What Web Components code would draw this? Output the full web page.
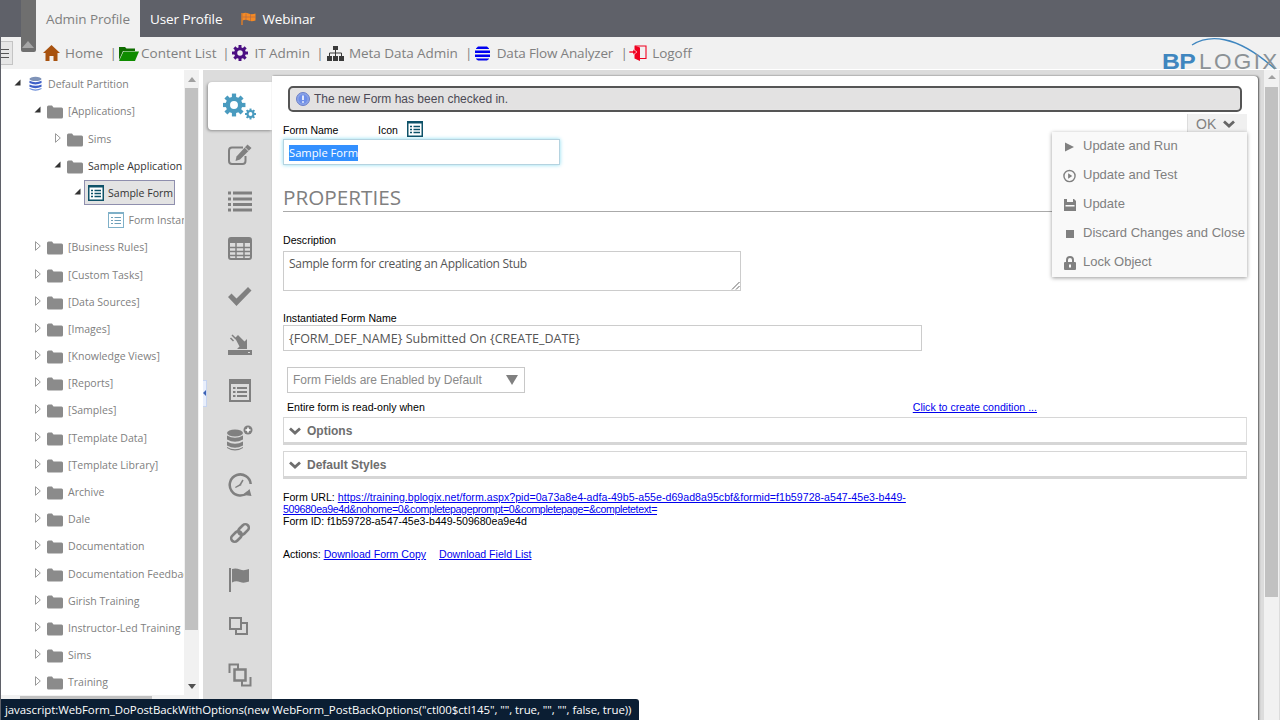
<!DOCTYPE html>
<html lang="en"><head><meta charset="utf-8"><title>Form</title>
<style>
html,body{margin:0;padding:0;height:720px;overflow:hidden;background:#fff;font-family:"Liberation Sans",Arial,sans-serif}
app-shell{width:1280px;height:720px}
</style></head><body>
<app-shell>
  <top-tabs slot="top"></top-tabs>
  <nav-bar slot="top"></nav-bar>
  <tree-panel slot="tree">
    <tree-row level="0" state="open" icon="db" label="Default Partition"></tree-row>
    <tree-row level="1" state="open" label="[Applications]"></tree-row>
    <tree-row level="2" state="closed" label="Sims"></tree-row>
    <tree-row level="2" state="open" label="Sample Application" dark></tree-row>
    <tree-row level="3" state="open" icon="form" label="Sample Form" selected></tree-row>
    <tree-row level="4" icon="formlight" label="Form Instances"></tree-row>
    <tree-row level="1" state="closed" label="[Business Rules]"></tree-row>
    <tree-row level="1" state="closed" label="[Custom Tasks]"></tree-row>
    <tree-row level="1" state="closed" label="[Data Sources]"></tree-row>
    <tree-row level="1" state="closed" label="[Images]"></tree-row>
    <tree-row level="1" state="closed" label="[Knowledge Views]"></tree-row>
    <tree-row level="1" state="closed" label="[Reports]"></tree-row>
    <tree-row level="1" state="closed" label="[Samples]"></tree-row>
    <tree-row level="1" state="closed" label="[Template Data]"></tree-row>
    <tree-row level="1" state="closed" label="[Template Library]"></tree-row>
    <tree-row level="1" state="closed" label="Archive"></tree-row>
    <tree-row level="1" state="closed" label="Dale"></tree-row>
    <tree-row level="1" state="closed" label="Documentation"></tree-row>
    <tree-row level="1" state="closed" label="Documentation Feedback"></tree-row>
    <tree-row level="1" state="closed" label="Girish Training"></tree-row>
    <tree-row level="1" state="closed" label="Instructor-Led Training"></tree-row>
    <tree-row level="1" state="closed" label="Sims"></tree-row>
    <tree-row level="1" state="closed" label="Training"></tree-row>
  </tree-panel>
  <side-tabs slot="side"></side-tabs>
  <form-pane slot="main"></form-pane>
  <ok-menu slot="over"></ok-menu>
  <status-tip slot="over">javascript:WebForm_DoPostBackWithOptions(new WebForm_PostBackOptions("ctl00$ctl145", "", true, "", "", false, true))</status-tip>
</app-shell>
<script>
const def=(name,html)=>{customElements.define(name,class extends HTMLElement{
  connectedCallback(){ if(this.shadowRoot) return; const r=this.attachShadow({mode:'open'}); r.innerHTML=typeof html==='function'?html(this):html; }
});};

const ICON={
 folder:'<svg width="16" height="14" viewBox="0 0 16 14"><path fill="#8b8b8b" d="M0 2q0-1.500 1.500-1.500h3.500l1.500 2h8q1.500 0 1.500 1.500v8q0 1.500-1.500 1.500h-13q-1.500 0-1.500-1.500z"/></svg>',
 db:'<svg width="13" height="16" viewBox="0 0 14 16"><ellipse cx="7" cy="2.500" rx="6.500" ry="2.300" fill="#7f93b8"/><path fill="#3f60c8" d="M.5 4.500q6.500 3 13 0v2.500q-6.500 3-13 0zM.5 8.500q6.500 3 13 0v2.500q-6.500 3-13 0z"/><path fill="#6f8fd8" d="M.5 12.300q6.500 3 13 0v1.200q-6.500 3.500-13 0z"/></svg>',
 form:'<svg width="16" height="16" viewBox="0 0 16 16"><rect x=".75" y=".75" width="14.500" height="14.500" fill="#fff" stroke="#0e5268" stroke-width="1.500"/><rect x="0" y="0" width="16" height="2.500" fill="#0e5268"/><path stroke="#0e5268" stroke-width="1.500" d="M3 5.500h2M6.500 5.500h6.500M3 8.500h2M6.500 8.500h6.500M3 11.500h2M6.500 11.500h6.500"/></svg>',
 formlight:'<svg width="16" height="16" viewBox="0 0 16 16"><rect x=".5" y=".5" width="15" height="15" fill="#fff" stroke="#7fb0c8"/><rect x="0" y="0" width="16" height="2" fill="#7fb0c8"/><path stroke="#6f9fb8" stroke-width="1" d="M3 5.500h2M6.500 5.500h6.500M3 8.500h2M6.500 8.500h6.500M3 11.500h2M6.500 11.500h6.500"/></svg>'
};
const gear=(c)=>{let t='';for(let i=0;i<8;i++){t+=`<rect x="-2.400" y="-13" width="4.800" height="7" transform="rotate(${i*45})" fill="${c}"/>`;}
  return t+`<circle r="7" fill="none" stroke="${c}" stroke-width="5"/>`;};

def('app-shell',`<style>
:host{display:flex;flex-direction:column;position:relative;overflow:hidden;border-left:1px solid #5f6169;box-sizing:border-box}
.body{flex:1;min-height:0;display:flex;margin-top:1px}
.tree{width:183px;flex:none}
</style>
<slot name="top"></slot>
<div class="body"><div class="tree"><slot name="tree"></slot></div><page-frame style="flex:1;min-width:0"><slot name="side" slot="side"></slot><slot name="main" slot="main"></slot></page-frame></div>
<slot name="over"></slot>`);

def('page-frame',`<style>
:host{display:flex}
.scroll{width:15px;background:#f1f1f1;position:relative;flex:none;display:flex;flex-direction:column;align-items:center}
.up{width:0;height:0;border:4px solid transparent;border-top:0;border-bottom:5px solid #a0a0a0;margin-top:7px}
.dn{width:0;height:0;border:4px solid transparent;border-bottom:0;border-top:5px solid #505050;margin-top:auto;margin-bottom:31px}
.thumb{width:13px;height:542px;background:#c1c1c1;margin-top:6px}
.gap{width:4px;background:#fff;flex:none}
.work{flex:1;min-width:0;background:#dcdcdc;display:flex;padding-top:6px}
.side{width:69px;flex:none}
.main{width:986px;flex:none;background:#fff;border-radius:0 4px 0 0;box-shadow:1px 0 2px #555;position:relative;height:700px}
.pscroll{width:15px;flex:none;margin-left:6px;background:#f1f1f1;margin-top:-6px;display:flex;flex-direction:column;align-items:center}
.pthumb{width:13px;height:510px;background:#c1c1c1;margin-top:8px}
.pup{width:0;height:0;border:4px solid transparent;border-top:0;border-bottom:4px solid #a0a0a0;margin-top:5px}
.handle{position:absolute;left:202px;top:380px;width:3px;height:25px;background:#e8eefb;border:1px solid #c6d4f0;border-width:1px 1px 1px 0}
.handle i{position:absolute;left:0;top:9px;border:3px solid transparent;border-left:0;border-right:3px solid #3c62b5}
</style>
<div class="scroll"><div class="up"></div><div class="thumb"></div><div class="dn"></div></div>
<div class="gap"></div>
<div class="work"><div class="side"><slot name="side"></slot></div><div class="main"><slot name="main"></slot></div><div class="pscroll"><div class="pup"></div><div class="pthumb"></div></div></div>
<div class="handle"><i></i></div>`);

def('top-tabs',`<style>
:host{display:flex;height:37px;background:#5f6169;padding-left:35px;font:13.5px "Open Sans",sans-serif;color:#fff;align-items:stretch}
.t{display:flex;align-items:center;padding:0 10px;letter-spacing:-.1px}
.a{background:#f1f1f1;color:#808080;width:104px;box-sizing:border-box}
.w{padding-left:9px;gap:5px}
</style>
<div class="t a">Admin Profile</div><div class="t">User Profile</div>
<div class="t w"><svg width="16" height="13" viewBox="0 0 16 13"><path fill="none" stroke="#f08020" stroke-width="1.300" d="M1 1v12"/><path fill="#f58a24" d="M1.500 1.500q3-1.500 6 0t7 0v7q-4 1.500-7 0t-6 0z"/><path stroke="#a8664a" stroke-width=".6" d="M5 1.500v7M9.500 2v7M1.500 5h13"/></svg>Webinar</div>`);

def('nav-bar',`<style>
:host{display:flex;position:relative;height:32px;background:#f1f1f1;font:13.5px "Open Sans",sans-serif;color:#808080;align-items:center;padding-left:42px;letter-spacing:-.02px}
.i{display:flex;align-items:center;height:100%;white-space:nowrap}
.sep{width:8px;text-align:center;flex:none;display:block}
svg{flex:none}
.grab{position:absolute;left:20px;top:-37px;width:15px;height:52px;background:#6f6f6f;border-radius:0 0 2px 2px}
.grab i{position:absolute;left:1px;bottom:4px;border:6.500px solid transparent;border-top:0;border-bottom:7px solid #a6a6a6}
.ham{position:absolute;left:-1px;top:4px;width:11px;height:22px;background:#e6e6e6;border:1px solid #c4c4c4;display:flex;flex-direction:column;justify-content:center;gap:3px}
.ham b{display:block;height:1px;background:#555;width:8px}
.logo{position:absolute;left:1161px;top:9px;height:28px;white-space:nowrap;font-family:"Liberation Sans",sans-serif;letter-spacing:0}
.bp{position:absolute;left:0;top:4px;font-size:22.500px;font-weight:700;color:#3f86bf;line-height:24px;letter-spacing:-.6px;transform:scaleX(1.100);transform-origin:0 0}
.lg{position:absolute;left:37px;top:4px;font-size:22.500px;color:#8c9296;line-height:24px;letter-spacing:2.400px}
.arc{position:absolute;left:28px;top:-9px}
</style>
<div class="grab"><i></i></div><div class="ham"><b></b><b></b><b></b></div>
<div class="i" style="gap:5px"><svg width="17" height="16" viewBox="0 0 17 16"><path fill="#a8520f" d="M8.500 0L17 8h-2.500v8H10.500v-5h-4v5H2.500V8H0z"/></svg><span>Home</span></div>
<span class="sep" style="margin-left:6px">|</span>
<div class="i" style="margin-left:2px"><svg width="20" height="15" viewBox="0 0 20 15"><path fill="#0f6d00" d="M0 1h6l1.500 1.500H16V5H4L0 14z"/><path fill="#0f8c00" d="M4.500 5.500H20L16 15H0z"/></svg><span style="margin-left:2px">Content List</span></div>
<span class="sep" style="margin-left:5.500px">|</span>
<div class="i" style="margin-left:2.500px;gap:6px"><svg width="16" height="16" viewBox="-13 -13 26 26">${gear('#4b0f82')}</svg><span>IT Admin</span></div>
<span class="sep" style="margin-left:6px">|</span>
<div class="i" style="margin-left:3px;gap:5px"><svg width="17" height="15" viewBox="0 0 17 15"><g fill="#3a3a3a"><rect x="6" y="0" width="5" height="4"/><rect x="0" y="10" width="5" height="5"/><rect x="6" y="10" width="5" height="5"/><rect x="12" y="10" width="5" height="5"/></g><path fill="none" stroke="#3a3a3a" d="M8.500 4v6M2.500 10V7h12v3"/></svg><span style="letter-spacing:-.06px">Meta Data Admin</span></div>
<span class="sep" style="margin-left:7px">|</span>
<div class="i" style="margin-left:2px;gap:7px"><svg width="15" height="15" viewBox="0 0 15 15"><path fill="#0000f0" d="M3 .5h9l2 2v.5H1v-.5zM0 4.500h15v2.500H0zM0 8.500h15V11H0zM1 12.500h13v.5l-2 1.500H3L1 13z"/></svg><span style="letter-spacing:-.17px">Data Flow Analyzer</span></div>
<span class="sep" style="margin-left:7px">|</span>
<div class="i" style="margin-left:1px;gap:5px"><svg width="18" height="16" viewBox="0 0 18 16"><path fill="none" stroke="#f00020" stroke-width="1.100" d="M6 1h11v12.500h-6"/><path fill="#f00020" d="M5.500 .5L11 2.500V16l-5.500-2.500z"/><path fill="#f00020" stroke="#fff" stroke-width=".6" d="M0 6h4V4l4 3-4 3V8H0z"/></svg><span>Logoff</span></div>
<div class="logo"><svg class="arc" width="92" height="36" viewBox="0 0 92 36"><path fill="none" stroke="#3f86bf" stroke-width="1.300" d="M2 8C18-2 45-4 85 32"/></svg><span class="bp">BP</span><span class="lg">LOGIX</span></div>`);

def('tree-panel',`<style>
:host{display:block;position:relative;height:650px;overflow:hidden;background:#fff;padding-top:.6px;box-sizing:border-box}
.hb{position:absolute;left:0;right:0;top:625px;height:15px;background:#f1f1f1}
.hb i{position:absolute;left:19px;top:1px;width:132px;height:13px;background:#c1c1c1}
</style><slot></slot><div class="hb"><i></i></div>`);

def('tree-row',e=>{
 const lv=+e.getAttribute('level'),st=e.getAttribute('state'),ic=e.getAttribute('icon')||'folder',sel=e.hasAttribute('selected'),dark=e.hasAttribute('dark')||sel,label=e.getAttribute('label');
 const arrow=st==='open'?'<svg width="7" height="7" viewBox="0 0 7 7"><path fill="#333" d="M6.500 .5v6h-6z"/></svg>':st==='closed'?'<svg width="6" height="10" viewBox="0 0 6 10"><path fill="#fff" stroke="#999" d="M.5 .7L5.300 5 .5 9.300z"/></svg>':'';
 return `<style>
:host{display:block;height:27.200px;white-space:nowrap;position:relative;font:10.550px "Open Sans",sans-serif;color:${dark?'#333':'#808080'}}
.r{position:absolute;left:${13+20*lv}px;top:0;height:100%;display:flex;align-items:center}
.a{width:${sel?10:13}px;box-sizing:border-box;display:flex;align-items:center;padding-left:${st==='closed'?1:0}px;margin-top:${st==='open'?-3:-2}px;flex:none}
.ic{display:flex;flex:none;margin-top:2px}
.t{margin-left:5px}
.sel{background:#e3e3e3;border:1px solid #8f8fae;height:23px;padding:0 3px;display:flex;align-items:center;width:83px}
.sel .ic{margin-top:0}
.sel .t{margin-left:4px}
</style>
<div class="r"><span class="a">${arrow}</span>${sel?`<div class="sel"><span class="ic">${ICON[ic]}</span><span class="t">${label}</span></div>`:`<span class="ic" style="${lv==4?'margin-left:.5px;margin-top:0':''}${ic==='db'?'margin-left:2px;margin-top:0':''}">${ICON[ic]}</span><span class="t" style="${ic==='db'?'margin-left:6px':''}">${label}</span>`}</div>`;
});

const S='#808080';
def('side-tabs',`<style>
:host{display:block;position:relative}
.t{height:47.250px;display:flex;align-items:center;justify-content:center;width:64px;margin-left:5px}
.t.a{background:#fff;border-radius:4px 0 0 4px;box-shadow:-1px 1px 3px rgba(0,0,0,.35);height:48px;margin-bottom:1px}
.wrap{padding-top:6px}
svg{display:block}
</style><div class="wrap">
<div class="t a"><svg width="34" height="28" viewBox="0 0 34 28"><g transform="translate(11 13) scale(.88)">${gear('#4a9bbf')}</g><g transform="translate(27.500 22) scale(.42)">${gear('#4a9bbf')}</g></svg></div>
<div class="t"><svg width="24" height="21" viewBox="0 0 24 21"><path fill="none" stroke="${S}" stroke-width="2" d="M15 3.500H4Q1 3.500 1 6.500V17Q1 20 4 20h10.500q3 0 3-3v-5"/><path fill="${S}" d="M19.500 .5l4 3.500L12 15.500l-4.500 1.500 1-4.500z"/><path stroke="#dcdcdc" d="M17 3.500l3.500 3.500"/></svg></div>
<div class="t"><svg width="24" height="21" viewBox="0 0 24 21"><path stroke="${S}" stroke-width="3" d="M0 2h3M5 2h19M0 8h3M5 8h19M0 13.500h3M5 13.500h19M0 19h3M5 19h19"/></svg></div>
<div class="t"><svg width="24" height="23" viewBox="0 0 24 23" style="margin-top:-1px"><rect x="1" y="1" width="22" height="21" rx="2" fill="none" stroke="${S}" stroke-width="2"/><rect x="1" y="1" width="22" height="5" fill="${S}"/><path stroke="${S}" stroke-width="1.500" d="M1 10.500h22M1 14.500h22M1 18.500h22M8 6v16M16 6v16"/></svg></div>
<div class="t"><svg width="24" height="19" viewBox="0 0 24 19"><path fill="${S}" d="M0 10l3.500-3.500 5 5L20 0l3.500 3.500L8.500 19z"/></svg></div>
<div class="t"><svg width="24" height="24" viewBox="0 0 24 24"><path fill="${S}" d="M0 18h24v5H0z"/><path fill="#dcdcdc" d="M20 20h2v1h-2z"/><path fill="${S}" d="M7 6l3-3 6.500 6.500L19 7v10H9l2.500-2.500z"/><path stroke="${S}" stroke-width="1.500" d="M4 3l4 4M2.500 6l3 3"/></svg></div>
<div class="t"><svg width="22" height="23" viewBox="0 0 22 23" style="margin-top:-1px"><rect x="1" y="1" width="20" height="21" fill="none" stroke="${S}" stroke-width="2"/><rect x="1" y="1" width="20" height="4" fill="${S}"/><path stroke="${S}" stroke-width="2" d="M4 9h2.500M8 9h10M4 13h2.500M8 13h10M4 17h2.500M8 17h10"/></svg></div>
<div class="t"><svg width="28" height="27" viewBox="0 0 28 27"><g fill="${S}"><ellipse cx="9" cy="8" rx="8" ry="3.500"/><path d="M1 10.500q8 4.500 16 0v4q-8 4.500-16 0zM1 16.500q8 4.500 16 0v4q-8 4.500-16 0zM1 22q8 4.500 16 0v1q-8 5-16 0z"/></g><circle cx="22" cy="5" r="4.500" fill="${S}"/><path stroke="#fff" stroke-width="1.500" d="M19.500 5h5M22 2.500v5"/></svg></div>
<div class="t"><svg width="24" height="24" viewBox="0 0 24 24"><path fill="none" stroke="${S}" stroke-width="2.500" d="M20 19A10.500 10.500 0 1 1 22.700 11"/><path fill="${S}" d="M23.500 23l-8-1 6-6zM12 11l-5 3 .7 1 6-3z"/><path stroke="${S}" stroke-width="1.500" d="M12 12l3-5"/></svg></div>
<div class="t"><svg width="20" height="22" viewBox="0 0 20 22"><g fill="none" stroke="${S}" stroke-width="2.600" transform="rotate(-45 10 11)"><rect x="-1" y="7.500" width="12" height="7" rx="3.500"/><rect x="9" y="7.500" width="12" height="7" rx="3.500"/></g></svg></div>
<div class="t"><svg width="22" height="24" viewBox="0 0 22 24" style="margin-top:1px"><path stroke="${S}" stroke-width="2" d="M1 0v24"/><path fill="${S}" d="M3 1q4-1 8 .5t9-.5v12.500q-5 2-9 .5t-8 .5z"/></svg></div>
<div class="t"><svg width="19" height="18" viewBox="0 0 19 18" style="margin-top:-2px;margin-left:-3px"><rect x="1" y="1" width="11" height="11" fill="none" stroke="${S}" stroke-width="2"/><path fill="none" stroke="${S}" stroke-width="2" d="M13 6h5v11H7v-4"/></svg></div>
<div class="t"><svg width="24" height="24" viewBox="0 0 24 24" style="margin-top:1px"><path fill="none" stroke="${S}" stroke-width="2" d="M1.500 10V1.500H10V6M22.500 14v8.500H14V18"/><rect x="6.500" y="6.500" width="11" height="11" fill="none" stroke="${S}" stroke-width="2.500"/></svg></div>
</div>`);

def('form-pane',`<style>
:host{display:block;height:100%;padding:10px 11px 0 11px;box-sizing:border-box;color:#000;font:10.600px/12px "Liberation Sans",sans-serif}
a{color:#00e;text-decoration:underline}
.msg{margin-left:5px;height:26px;box-sizing:border-box;width:954px;background:#e3e2e2;border:2px solid #555;border-radius:5px;box-shadow:inset 0 0 1px #fff;display:flex;align-items:center;font:12px "Liberation Sans",sans-serif;color:#4c4a55;padding-left:6px;gap:4px}
.lab{font-size:10.500px;display:flex;height:18px;align-items:flex-end;margin-top:6px;position:relative}
.lab span{display:inline-block}
.lab svg{position:absolute;left:124px;top:3px}
.inp{box-sizing:border-box;height:26px;border:1px solid #b5d3e0;box-shadow:0 0 4px #8adcf0;width:277px;display:flex;align-items:center;padding:1px 0 0 5px;font:11.200px "Open Sans",sans-serif;color:#fff}
.inp span{background:#3390ff;line-height:16px}
h2{margin:20px 0 0;font:400 20.700px/24px "Open Sans",sans-serif;color:#808080;border-bottom:1px solid #aaa;height:26px;box-sizing:content-box}
.box{box-sizing:border-box;border:1px solid #ccc;font:12.500px "Open Sans",sans-serif;color:#555;padding:0 5px;display:flex;align-items:flex-start}
.pan{height:28px;border:1px solid #d6d6d6;border-bottom-width:3px;border-right-color:#ddd;display:flex;align-items:center;font:700 12px "Liberation Sans",sans-serif;color:#6e6e6e;padding:2px 0 0 5px;gap:6px;box-sizing:border-box;width:964px}
.pan svg{flex:none}
.sel{width:238px;height:26px;margin:16px 0 0 4px;border:1px solid #c8c8c8;box-sizing:border-box;display:flex;align-items:center;padding:0 6px 0 5px;font:12px "Liberation Sans",sans-serif;color:#8a8a8a;justify-content:space-between}
.sel i{border:6px solid transparent;border-bottom:0;border-top:10px solid #808080}
.cond{display:flex;justify-content:space-between;height:12px;margin-top:8px;padding:0 210px 0 4px}
.nw{white-space:nowrap}
</style>
<div class="msg"><svg width="14" height="14" viewBox="0 0 14 14"><circle cx="7" cy="7" r="6.500" fill="#8ba4e8" stroke="#6a7fc8"/><circle cx="7" cy="7" r="4.500" fill="#6f8fe8"/><path stroke="#fff" stroke-width="1.600" d="M7 3.500v4.500M7 9.300v1.500"/></svg><span>The new Form has been checked in.</span></div>
<div class="lab"><span style="width:95px">Form Name</span><span>Icon</span><svg width="16" height="16" viewBox="0 0 16 16"><rect x=".75" y=".75" width="14.500" height="14.500" fill="#fff" stroke="#0e5268" stroke-width="1.500"/><rect x="0" y="0" width="16" height="2.500" fill="#0e5268"/><path stroke="#0e5268" stroke-width="1.500" d="M3 5.500h2M6.500 5.500h6.500M3 8.500h2M6.500 8.500h6.500M3 11.500h2M6.500 11.500h6.500"/></svg></div>
<div class="inp" style="margin-top:3px"><span>Sample Form</span></div>
<h2>PROPERTIES</h2>
<div style="margin-top:22px">Description</div>
<div class="box" style="margin-top:5px;width:458px;height:40px;padding-top:3px;position:relative;font-size:12px;letter-spacing:-.3px">Sample form for creating an Application Stub<svg style="position:absolute;right:0;bottom:0" width="9" height="9" viewBox="0 0 9 9"><path stroke="#666" d="M1 8.500L8.500 1M5 8.500L8.500 5"/></svg></div>
<div style="margin-top:21px">Instantiated Form Name</div>
<div class="box" style="margin-top:1px;width:639px;height:26px;align-items:center">{FORM_DEF_NAME} Submitted On {CREATE_DATE}</div>
<div class="sel"><span>Form Fields are Enabled by Default</span><i></i></div>
<div class="cond"><span>Entire form is read-only when</span><a>Click to create condition ...</a></div>
<div class="pan" style="margin-top:4px"><svg width="12" height="8" viewBox="0 0 12 8"><path fill="none" stroke="#6e6e6e" stroke-width="2.800" d="M1 1.500l5 4.500 5-4.500"/></svg>Options</div>
<div class="pan" style="margin-top:6px"><svg width="12" height="8" viewBox="0 0 12 8"><path fill="none" stroke="#6e6e6e" stroke-width="2.800" d="M1 1.500l5 4.500 5-4.500"/></svg>Default Styles</div>
<div style="margin-top:12px" class="nw">
<div>Form URL: <a style="letter-spacing:.035px">https://training.bplogix.net/form.aspx?pid=0a73a8e4-adfa-49b5-a55e-d69ad8a95cbf&amp;formid=f1b59728-a547-45e3-b449-</a></div>
<div><a style="letter-spacing:-.37px">509680ea9e4d&amp;nohome=0&amp;completepageprompt=0&amp;completepage=&amp;completetext=</a></div>
<div>Form ID: f1b59728-a547-45e3-b449-509680ea9e4d</div>
</div>
<div style="margin-top:21px">Actions: <a>Download Form Copy</a> <a style="margin-left:10px">Download Field List</a></div>`);

def('ok-menu',`<style>
:host{position:absolute;left:1051px;top:114px;width:195px;font:13px "Liberation Sans",sans-serif;color:#808080}
.ok{margin-left:135px;width:60px;height:18px;background:#f0f0f0;box-sizing:border-box;border-left:1px solid #ddd;display:flex;align-items:center;padding:2px 0 0 8px;gap:7px;font-size:14px}
.ok svg{margin-top:-1px}
.m{background:#f9f9f9;box-shadow:0 1px 4px rgba(0,0,0,.4);height:145px;box-sizing:border-box}
.r{height:29px;display:flex;align-items:center;white-space:nowrap;position:relative;top:-1px}
.i{width:31px;padding:2px 7px 0 11px;display:flex;justify-content:center;box-sizing:border-box;flex:none}
</style>
<div class="ok">OK<svg width="12" height="8" viewBox="0 0 12 8"><path fill="none" stroke="#666" stroke-width="2.800" d="M1 1.500l5 4.500 5-4.500"/></svg></div>
<div class="m">
<div class="r"><span class="i"><svg width="11" height="12" viewBox="0 0 11 12"><path fill="#808080" d="M1 1.500l9 4.500-9 4.500z"/></svg></span>Update and Run</div>
<div class="r"><span class="i"><svg width="14" height="14" viewBox="0 0 14 14"><circle cx="7" cy="7" r="6" fill="none" stroke="#808080" stroke-width="1.500"/><path fill="#808080" d="M5.500 4l4.500 3-4.500 3z"/></svg></span>Update and Test</div>
<div class="r"><span class="i"><svg width="12" height="12" viewBox="0 0 12 12"><path fill="#808080" d="M0 0h10l2 2v10H0z"/><path fill="#f9f9f9" d="M3 0h6v3H3zM1.500 6h9v1.500h-9z"/></svg></span>Update</div>
<div class="r"><span class="i"><svg width="8" height="8" viewBox="0 0 8 8"><rect width="8" height="8" fill="#808080"/></svg></span>Discard Changes and Close</div>
<div class="r"><span class="i"><svg width="12" height="14" viewBox="0 0 12 14"><path fill="none" stroke="#808080" stroke-width="2" d="M3 6.500V4a3 3 0 0 1 6 0v2.500"/><rect y="6" width="12" height="8" rx="1" fill="#808080"/><rect x="5" y="8.500" width="2" height="3" fill="#f9f9f9"/></svg></span>Lock Object</div>
</div>`);

def('status-tip',`<style>
:host{position:absolute;left:-1px;top:699px;height:21px;background:#0b1e33;color:#fff;font:11.450px "Open Sans",sans-serif;display:flex;align-items:center;padding:0 8px 0 5px;white-space:nowrap;border-radius:0 3px 0 0;box-sizing:border-box;letter-spacing:-.06px}
</style><slot></slot>`);
</script>
</body></html>
